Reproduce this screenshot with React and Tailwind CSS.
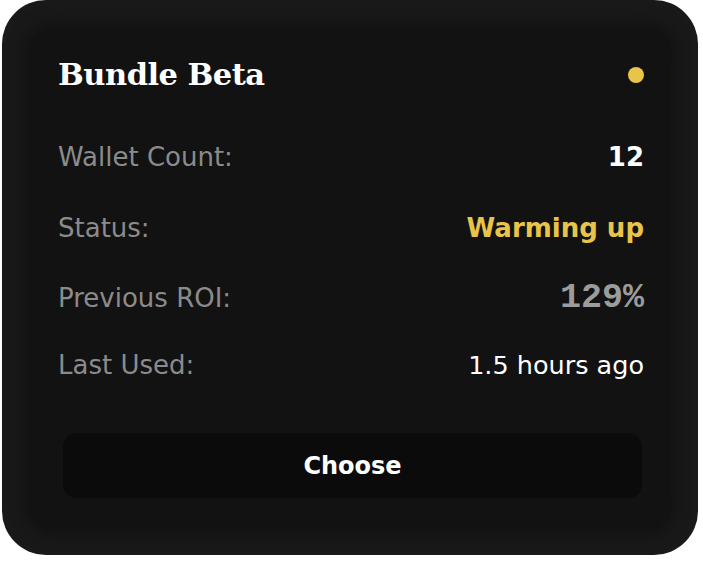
const rows = [
  { label: "Wallet Count:", value: "12", cls: "text-white font-bold text-[26px]", mt: "mt-[42px]" },
  { label: "Status:", value: "Warming up", cls: "text-[#e8c449] font-bold text-[26px]", mt: "mt-[31px]" },
  {
    label: "Previous ROI:",
    value: "129%",
    cls: "text-[#9c9c9c] font-bold font-['Liberation_Mono',monospace] text-[35px]",
    mt: "mt-[30px]",
  },
  { label: "Last Used:", value: "1.5 hours ago", cls: "text-white text-[25.5px]", mt: "mt-[27px]" },
];

export default function App() {
  return (
    <div className="min-h-screen bg-white font-['DejaVu_Sans',sans-serif]">
      <div className="ml-[2px] w-[696px] h-[555px] rounded-[44px] bg-[#191919] p-[27px] pt-[28px]">
        <div className="h-[502px] rounded-[24px] bg-[#121212] shadow-[0_0_14px_6px_#131313] pl-[29px] pr-[27px] pt-[27px]">
          {/* Header */}
          <div className="flex items-center justify-between h-10">
            <h1 className="text-[30.5px] font-bold text-white font-['DejaVu_Serif',serif] tracking-[-0.5px]">
              Bundle Beta
            </h1>
            <span className="w-4 h-4 rounded-full bg-[#e8c449]" />
          </div>

          {/* Info rows */}
          {rows.map((row) => (
            <div
              key={row.label}
              className={`flex items-center justify-between h-10 ${row.mt}`}
            >
              <span className="text-[26px] text-[#8b8b8b]">{row.label}</span>
              <span className={row.cls}>{row.value}</span>
            </div>
          ))}

          <button className="mt-[48px] ml-[5px] w-[579px] h-[65px] rounded-[14px] bg-[#0b0b0b] text-white text-[24px] font-bold">
            Choose
          </button>
        </div>
      </div>
    </div>
  );
}
